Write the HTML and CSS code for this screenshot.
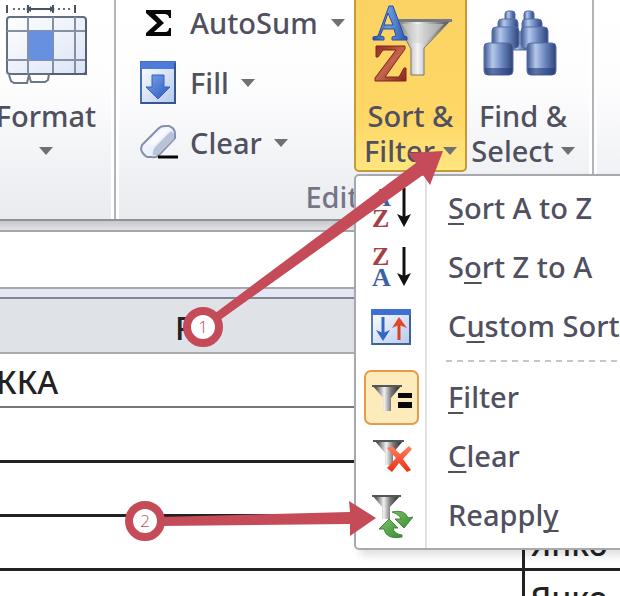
FILE: index.html
```html
<!DOCTYPE html>
<html lang="en">
<head>
<meta charset="utf-8">
<title>Sort and Filter menu</title>
<link rel="stylesheet" href="styles.css">
</head>
<body>
<svg class="defs" width="0" height="0" aria-hidden="true">
  <defs>
    <linearGradient id="steel" x1="0" x2="1"><stop offset="0" stop-color="#6c6c6c"/><stop offset=".4" stop-color="#f4f4f4"/><stop offset=".6" stop-color="#b5b5b5"/><stop offset="1" stop-color="#4f4f4f"/></linearGradient>
    <linearGradient id="dark" x1="0" x2="1"><stop offset="0" stop-color="#222"/><stop offset=".4" stop-color="#f2f2f2"/><stop offset=".65" stop-color="#777"/><stop offset="1" stop-color="#222"/></linearGradient>
    <linearGradient id="lens" x1="0" x2="1"><stop offset="0" stop-color="#3d5791"/><stop offset=".3" stop-color="#b4c8ec"/><stop offset=".65" stop-color="#6682ba"/><stop offset="1" stop-color="#2f4379"/></linearGradient>
    <linearGradient id="blue" x1="0" y1="0" x2="1" y2="1"><stop offset="0" stop-color="#7ba4ec"/><stop offset="1" stop-color="#2c58bd"/></linearGradient>
    <linearGradient id="pane" x1="0" y1="0" x2="1" y2="1"><stop offset="0" stop-color="#fff"/><stop offset="1" stop-color="#b5c9ee"/></linearGradient>
    <linearGradient id="cells" x1="0" y1="0" x2="1" y2="1"><stop offset="0" stop-color="#fff"/><stop offset="1" stop-color="#dbe3f5"/></linearGradient>
    <linearGradient id="leaf" x1="0" y1="0" x2="1" y2="1"><stop offset="0" stop-color="#8dcc78"/><stop offset="1" stop-color="#2c7f27"/></linearGradient>
    <linearGradient id="brick" x1="0" y1="0" x2="1" y2="1"><stop offset="0" stop-color="#8d2a20"/><stop offset=".5" stop-color="#c4644f"/><stop offset="1" stop-color="#86251c"/></linearGradient>
    <linearGradient id="sky" x1="0" y1="0" x2="1" y2="0"><stop offset="0" stop-color="#274f9f"/><stop offset=".45" stop-color="#6d9be4"/><stop offset="1" stop-color="#2855a8"/></linearGradient>
    <linearGradient id="cross" x1="0" y1="0" x2="0" y2="1"><stop offset="0" stop-color="#ff8061"/><stop offset="1" stop-color="#ee2c12"/></linearGradient>
  </defs>
</svg>

<header class="ribbon">
  <section class="group cells-group">
    <button class="big format" type="button">
      <svg class="art" width="88" height="86" viewBox="2 0 88 86" aria-hidden="true">
        <path d="M7 5v8M75 5v8M28 5v8M53 5v8M28 9h25" stroke="#4a5362" stroke-width="2" fill="none"/>
        <path d="M13 9h12M58 9h12" stroke="#6a7280" stroke-width="2" stroke-dasharray="2 3"/>
        <path d="M26 9l5-3v6zM55 9l-5-3v6z" fill="#4a5362"/>
        <path d="M9 75l2 6 3 2h13l2-8M29 75l2 7h14l3-2 1-6" fill="#fff" stroke="#6d7888" stroke-width="2"/>
        <rect x="7" y="17" width="79" height="57" rx="3" fill="url(#cells)" stroke="#64707f" stroke-width="2"/>
        <path d="M28 17v57M53 17v57M75 17v57M7 31h79M7 60h79" stroke="#8490a4" stroke-width="2"/>
        <rect x="29" y="31" width="24" height="29" fill="#6890e0"/>
        <path d="M86 19v55H50" fill="none" stroke="#536074" stroke-width="2"/>
      </svg>
      <span class="line">Format</span>
      <span class="line"><i class="arrow"></i></span>
    </button>
  </section>

  <section class="group editing">
    <div class="tools">
      <div class="stack">
        <button class="row" type="button">
          <svg width="38" height="44" viewBox="0 0 38 44" aria-hidden="true"><path d="M6 9h25v8h-2q0-4-5-4H15l9 9-10 9h11q4 0 4-4h2v8H6v-3l11-10L6 12z" fill="#080808"/></svg>
          <span>AutoSum</span><i class="arrow far"></i>
        </button>
        <button class="row" type="button">
          <svg width="38" height="44" viewBox="0 0 38 44" aria-hidden="true"><rect x="1" y="1" width="34" height="41" fill="url(#pane)" stroke="#4a6fb5" stroke-width="2"/><path d="M1 1h34v7H1z" fill="#4d7bdc"/><path d="M35 2v40H1" fill="none" stroke="#37568c" stroke-width="2"/><path d="M12 14h12v12h6L18 38 6 26h6z" fill="url(#blue)" stroke="#3560bd"/></svg>
          <span>Fill</span><i class="arrow"></i>
        </button>
        <button class="row" type="button">
          <svg width="38" height="44" viewBox="0 0 38 44" aria-hidden="true"><path d="M2 24L19 7q2-2 6-2h4q6 2 6 8v4L19 34q-3 3-7 2H7q-5-3-6-8z" fill="url(#cells)" stroke="#8490ad" stroke-width="2"/><path d="M34 13v5L18 34h-5q-1-5 3-9L31 10z" fill="#b9c3d8"/><path d="M6 23L22 8h8L14 24z" fill="#f8f9ff"/><path d="M18 36h20" stroke="#050505" stroke-width="3"/></svg>
          <span>Clear</span><i class="arrow"></i>
        </button>
      </div>
      <button class="big sort" type="button" aria-haspopup="menu" aria-expanded="true">
        <svg class="art" width="88" height="86" viewBox="2 0 88 86" aria-hidden="true">
          <path d="M31 21h54L59 48v27H46V49z" fill="url(#steel)" stroke="#777"/>
          <path d="M29 19h58v3H31z" fill="#777c83"/>
          <path d="M37 24h42L60 43H49z" fill="#d1d1d1" opacity=".55"/>
          <path d="M13 36L24 6h4l11 30 3 1v3H27v-3l4-1-2-7H18l-3 7 4 1v3H8v-3zM19 25h9l-5-12z" fill="url(#sky)" stroke="#2450a0"/>
          <path d="M11 46h29v3L20 77h14l5-9h2v13H10v-3l21-28H18l-5 7h-2z" fill="url(#brick)" stroke="#80261c"/>
        </svg>
        <span class="line">Sort &amp;</span>
        <span class="line">Filter<i class="arrow tight"></i></span>
      </button>
      <button class="big find" type="button">
        <svg class="art" width="88" height="86" viewBox="3 0 88 86" aria-hidden="true">
          <g fill="url(#lens)" stroke="#566fa5">
            <rect x="36" y="32" width="16" height="18" rx="2"/>
            <rect x="29" y="11" width="10" height="12" rx="3"/><rect x="48" y="11" width="10" height="12" rx="3"/>
            <rect x="22" y="19" width="20" height="13" rx="4"/><rect x="46" y="19" width="20" height="13" rx="4"/>
            <rect x="16" y="27" width="27" height="21" rx="4"/><rect x="45" y="27" width="27" height="21" rx="4"/>
            <rect x="8" y="43" width="29" height="32" rx="4"/><rect x="51" y="43" width="29" height="32" rx="4"/>
          </g>
          <path d="M9 68h27v4l-2 3H11l-2-3zM52 68h27v4l-2 3H54l-2-3z" fill="#263c79" opacity=".6"/>
        </svg>
        <span class="line">Find &amp;</span>
        <span class="line">Select<i class="arrow"></i></span>
      </button>
    </div>
    <div class="group-name">Editing</div>
  </section>
</header>

<div class="formula"><input type="text" aria-label="Formula bar"></div>

<main class="sheet">
  <table>
    <colgroup><col class="wide"><col></colgroup>
    <thead><tr><th scope="col">P</th><th scope="col"></th></tr></thead>
    <tbody>
      <tr class="soft"><td class="cut">ККА</td><td></td></tr>
      <tr><td></td><td></td></tr>
      <tr><td></td><td></td></tr>
      <tr><td></td><td>Янко</td></tr>
      <tr><td></td><td>Янко</td></tr>
    </tbody>
  </table>
</main>

<div class="menu" role="menu">
  <button class="item" type="button" role="menuitem">
    <span class="icon"><svg width="42" height="42" viewBox="0 0 42 42" aria-hidden="true"><text class="glyph a" x="1" y="18">A</text><text class="glyph z" x="1" y="39">Z</text><path d="M33 0v32" stroke="#111" stroke-width="3"/><path d="M26 26l7 3 7-3-7 13z" fill="#111"/></svg></span>
    <span><u>S</u>ort A to Z</span>
  </button>
  <button class="item" type="button" role="menuitem">
    <span class="icon"><svg width="42" height="42" viewBox="0 0 42 42" aria-hidden="true"><text class="glyph z" x="1" y="18">Z</text><text class="glyph a" x="1" y="39">A</text><path d="M33 0v32" stroke="#111" stroke-width="3"/><path d="M26 26l7 3 7-3-7 13z" fill="#111"/></svg></span>
    <span>S<u>o</u>rt Z to A</span>
  </button>
  <button class="item" type="button" role="menuitem">
    <span class="icon"><svg width="42" height="42" viewBox="0 0 42 42" aria-hidden="true"><rect x="1" y="4" width="38" height="34" fill="url(#pane)" stroke="#5578b8" stroke-width="2"/><path d="M0 3h40v6H0z" fill="#3d70d5"/><path d="M39 9v29H1" fill="none" stroke="#41618f" stroke-width="2"/><path d="M12 11v18" stroke="#3468c6" stroke-width="3"/><path d="M5 24l7 3 7-3-7 11z" fill="#3468c6"/><path d="M28 16v18" stroke="#dc3f20" stroke-width="3"/><path d="M21 22l7-11 8 11-8-3z" fill="#e54828"/></svg></span>
    <span>C<u>u</u>stom Sort</span>
  </button>
  <hr>
  <button class="item" type="button" role="menuitem">
    <span class="icon on"><svg width="42" height="42" viewBox="0 0 42 42" aria-hidden="true"><path d="M2 9h28L20 21v13h-8V21z" fill="url(#dark)"/><path d="M1 8h30v2H1z" fill="#555"/><path d="M27 16h14v5H27zM27 25h14v6H27z" fill="#080808"/></svg></span>
    <span><u>F</u>ilter</span>
  </button>
  <button class="item" type="button" role="menuitem">
    <span class="icon"><svg width="42" height="42" viewBox="0 0 42 42" aria-hidden="true"><path d="M4 5h28L22 17v12h-8V17z" fill="url(#dark)"/><path d="M2 4h31v2H2z" fill="#555"/><path d="M16 12l5-2 8 8 9-8 3 3-9 10 8 11-4 2-8-9-7 9-5-4 9-10z" fill="url(#cross)"/></svg></span>
    <span><u>C</u>lear</span>
  </button>
  <button class="item" type="button" role="menuitem">
    <span class="icon"><svg width="42" height="46" viewBox="0 0 42 46" aria-hidden="true"><path d="M2 3h27L19 14v12h-8V14z" fill="url(#dark)"/><path d="M1 2h29v2H1z" fill="#555"/><path d="M21 19q13-3 16 6l5-1-9 11-9-9h6q-1-4-9-7zM31 44q-16 3-18-8H8l10-10 9 9h-5q1 6 9 7z" fill="url(#leaf)" stroke="#3c8a35"/></svg></span>
    <span>Reappl<u>y</u></span>
  </button>
</div>

<svg class="callouts" width="620" height="596" viewBox="0 0 620 596" role="img" aria-label="Steps 1 and 2">
  <path d="M214 314L416 163 408 153 443 151 430 185 423 175 220 320z"/>
  <path d="M160 517L350 512 349 501 376 518 350 536 350 524 160 526z"/>
  <circle cx="203" cy="327" r="16"/><circle cx="145" cy="521" r="16"/>
  <text x="203" y="333">1</text><text x="145" y="527">2</text>
</svg>
</body>
</html>
```
FILE: styles.css
```css
* { box-sizing: border-box; }

body {
  margin: 0;
  min-height: 100vh;
  position: relative;
  overflow: hidden;
  background: #fff;
  color: #50505f;
  font: 500 29px/36px "Noto Sans", "Open Sans", sans-serif;
}

button {
  margin: 0;
  padding: 0;
  border: 0;
  background: none;
  color: inherit;
  font: inherit;
}

svg { display: block; flex: none; }
.defs { position: absolute; }

.ribbon {
  display: flex;
  border-bottom: 2px solid #909297;
  background: linear-gradient(#fff 0, #fdfdfe 40%, #e9ebef 100%);
}

.group {
  border-right: 2px solid #b2b4ba;
  box-shadow: inset -3px 0 #fff, 3px 0 #fff;
}

.cells-group { width: 116px; }
.editing { width: 478px; }
.tools { display: flex; height: 172px; }

.stack {
  width: 238px;
  margin-top: -7px;
  padding-left: 24px;
}

.row {
  display: flex;
  align-items: center;
  gap: 12px;
  height: 60px;
}

.big {
  display: flex;
  flex-direction: column;
  align-items: center;
}

.art { margin-bottom: 12px; }

.line {
  display: flex;
  align-items: center;
  gap: 7px;
  height: 35px;
  white-space: nowrap;
}

.format { width: 92px; }

.sort {
  width: 113px;
  height: 172px;
  border: 2px solid #c79a35;
  border-top: 0;
  border-radius: 0 0 5px 5px;
  background: linear-gradient(#fbd364, #fed766 70%, #ffe67f);
}

.find { width: 112px; }

.arrow {
  border: 7px solid transparent;
  border-top: 8px solid #707070;
  border-bottom: 0;
}

.far { margin-left: 1px; }
.tight { margin-left: 1px; }

.group-name {
  height: 47px;
  padding-top: 7px;
  text-align: center;
  color: #747685;
}

.formula {
  padding-top: 9px;
  border-bottom: 2px solid #85878d;
  background: linear-gradient(#c6c8cc, #e1e3e6 9px, #e4e6f5 10px);
}

.formula input {
  display: block;
  width: 100%;
  height: 59px;
  margin-bottom: 8px;
  border: 2px solid #a5a7aa;
  border-width: 2px 0;
  background: #fff;
}

.sheet { overflow: hidden; height: 297px; }

table {
  width: 100%;
  table-layout: fixed;
  border-collapse: collapse;
  color: #222;
  font-size: 32px;
}

.wide { width: 523px; }

th, td {
  height: 54px;
  padding: 4px 0 0 6px;
  border-bottom: 3px solid #222;
  white-space: nowrap;
  text-align: left;
  font-weight: 500;
}

th {
  padding-left: 175px;
  border-bottom: 2px solid #a9acb0;
  background: #dfe3e7;
}

.soft td { border-bottom: 2px solid #777; }
tr td + td { border-left: 3px solid #222; }
.cut { text-indent: -10px; }

.menu {
  position: absolute;
  top: 174px;
  left: 354px;
  right: -4px;
  padding: 3px 0;
  overflow: hidden;
  border: 2px solid #a7a9ac;
  border-radius: 5px;
  background: linear-gradient(90deg, #fff 69px, #dfe1e3 69px 71px, #fff 71px);
  box-shadow: 5px 5px 9px #0002;
}

.item {
  display: flex;
  align-items: center;
  gap: 29px;
  width: 100%;
  height: 59px;
  padding-left: 8px;
  white-space: nowrap;
}

.item > span + span { padding-bottom: 2px; }

.icon {
  display: flex;
  align-items: center;
  justify-content: center;
  flex: none;
  width: 55px;
  height: 55px;
}

.on {
  border: 2px solid #e9994c;
  border-radius: 7px;
  background: #fdebbb;
}

u {
  text-decoration-thickness: 2px;
  text-underline-offset: 4px;
  text-decoration-skip-ink: none;
}

hr {
  height: 2px;
  margin: 4px 0 6px 90px;
  border: 0;
  background: repeating-linear-gradient(90deg, #c5c6c9 0 6px, #fff 6px 11px);
}

.glyph { font: bold 26px "Liberation Serif", serif; }
.a { fill: #3b62a8; }
.z { fill: #a34146; }

.callouts {
  position: absolute;
  top: 0;
  left: 0;
  pointer-events: none;
}

.callouts path { fill: #c44b57; }
.callouts circle { fill: #fff; stroke: #c44b57; stroke-width: 8px; }

.callouts text {
  fill: #c44b57;
  font: 300 17px "Open Sans", sans-serif;
  text-anchor: middle;
}
```
